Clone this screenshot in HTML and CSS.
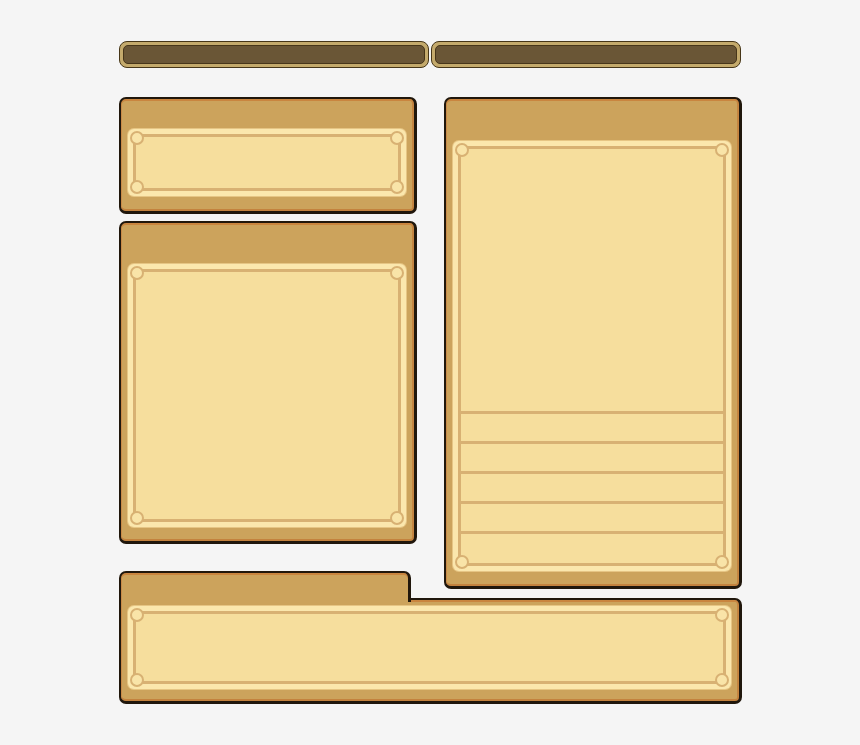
FILE: index.html
```html
<!DOCTYPE html>
<html>
<head>
<meta charset="utf-8">
<link rel="stylesheet" href="styles.css">
</head>
<body>
<div class="stage">
  <div class="bars">
    <div class="bar"><div class="bar-fill"></div></div>
    <div class="bar"><div class="bar-fill"></div></div>
  </div>
  <div class="board">
    <section class="panel panel-a">
      <div class="frame"><div class="frame-inner"></div></div>
    </section>
    <section class="panel panel-b">
      <div class="frame"><div class="frame-inner"></div></div>
    </section>
    <section class="panel panel-c">
      <div class="frame">
        <div class="frame-inner list">
          <div class="list-top"></div>
          <div class="row"></div>
          <div class="row"></div>
          <div class="row"></div>
          <div class="row"></div>
          <div class="row"></div>
        </div>
      </div>
    </section>
    <section class="panel-d">
      <div class="tab"></div>
      <div class="panel body">
        <div class="frame"><div class="frame-inner"></div></div>
      </div>
    </section>
  </div>
</div>
</body>
</html>
```

FILE: styles.css
```css
* { box-sizing: border-box; }
body { margin: 0; background: #f5f5f5; }
.stage { width: 623px; margin-left: 119px; padding-top: 41px; }

.bars { display: flex; gap: 2px; height: 27px; }
.bar {
  flex: 0 0 310px;
  border: 1px solid #463618;
  border-radius: 8px;
  background: #c4aa6c;
  padding: 3px;
}
.bar-fill {
  height: 100%;
  border: 1px solid #47361a;
  border-radius: 5px;
  background: #6a5636;
}

.board {
  display: grid;
  grid-template-columns: 298px 298px;
  column-gap: 27px;
  grid-template-rows: 117px 330px 27px 18px auto;
  margin-top: 29px;
}

.panel {
  border: solid #20170c;
  border-width: 2px 3px 3px 2px;
  border-radius: 7px;
  background: #cca35c;
  box-shadow: inset 0 2px 0 #c9853f, inset 1px 0 0 #c98a47, inset 0 -2px 0 #c3823e, inset -2px 0 0 #c48541;
  display: flex;
  flex-direction: column;
  padding-left: 7px;
  padding-right: 8px;
}
.panel-a { grid-column: 1; grid-row: 1; padding-top: 30px; padding-bottom: 15px; }
.panel-b { grid-column: 1; grid-row: 2; margin-top: 7px; padding-top: 41px; padding-bottom: 14px; }
.panel-c { grid-column: 2; grid-row: 1 / 5; padding-top: 42px; padding-bottom: 15px; }

.panel-d { grid-column: 1 / 3; grid-row: 4 / 6; display: flex; flex-direction: column; }
.tab {
  width: 292px;
  height: 31px;
  margin-bottom: -4px;
  border: solid #20170c;
  border-width: 2px 3px 0 2px;
  border-radius: 7px 7px 0 0;
  background: #cca35c;
  box-shadow: inset 0 2px 0 #c9853f, inset 1px 0 0 #c98a47;
  position: relative;
  z-index: 1;
}
.panel.body { height: 106px; border-radius: 0 7px 7px 7px; padding-top: 6px; padding-bottom: 12px; }

.frame {
  flex: 1;
  display: flex;
  position: relative;
  background: #fbe7ad;
  border-radius: 6px;
  padding: 5px;
  box-shadow: 0 0 0 1px #e6c584;
}
.frame-inner {
  flex: 1;
  position: relative;
  border: 3px solid #d8b173;
  background: #f6de9d;
}
.frame::before, .frame::after, .frame-inner::before, .frame-inner::after {
  content: "";
  position: absolute;
  width: 10px;
  height: 10px;
  border: 2px solid #d8b173;
  border-radius: 50%;
  background: #f9e4a8;
  z-index: 1;
}
.frame::before { left: 2px; top: 2px; }
.frame::after { right: 2px; top: 2px; }
.frame-inner::before { left: -6px; bottom: -6px; }
.frame-inner::after { right: -6px; bottom: -6px; }

.list { display: flex; flex-direction: column; padding-bottom: 2px; }
.list-top { flex: 1; }
.row { height: 30px; border-top: 3px solid #d8b173; }
```
